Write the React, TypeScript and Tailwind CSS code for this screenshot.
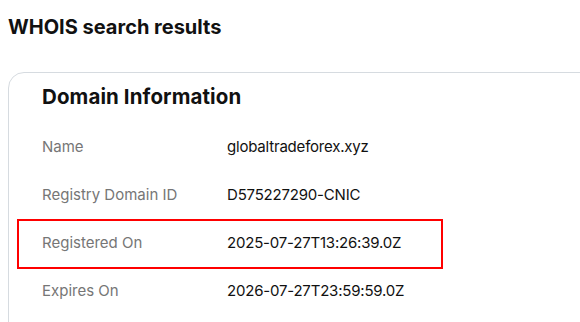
const rows = [
  { label: 'Name', value: 'globaltradeforex.xyz' },
  { label: 'Registry Domain ID', value: 'D575227290-CNIC' },
  { label: 'Registered On', value: '2025-07-27T13:26:39.0Z', marked: true },
  { label: 'Expires On', value: '2026-07-27T23:59:59.0Z' },
];

export default function App() {
  return (
    <div
      className="h-[322px] w-[580px] overflow-hidden bg-white pl-2 pt-[13px]"
      style={{ fontFamily: 'Inter, "Noto Sans", sans-serif' }}
    >
      <h1 className="text-[20px] font-bold leading-7 text-[#111111]">WHOIS search results</h1>

      <div className="mt-[31px] h-[400px] w-[640px] rounded-2xl border border-[#d6dbe0] pl-[33px] pt-[10px]">
        <h2 className="text-[20.5px] font-bold leading-7 tracking-[0.1px] text-[#111111]">Domain Information</h2>

        <div className="mt-[12px] flex flex-col">
          {rows.map((row) => (
            <div key={row.label} className="relative flex h-[48px] items-center text-[15px]">
              <span className="w-[185px] text-[#767676]">{row.label}</span>
              <span className="tracking-[-0.2px] text-[#111111]">{row.value}</span>
              {row.marked && (
                <div className="absolute left-[-25px] top-0 h-[50px] w-[426px] border-2 border-[#ff0000]" />
              )}
            </div>
          ))}
        </div>
      </div>
    </div>
  );
}
